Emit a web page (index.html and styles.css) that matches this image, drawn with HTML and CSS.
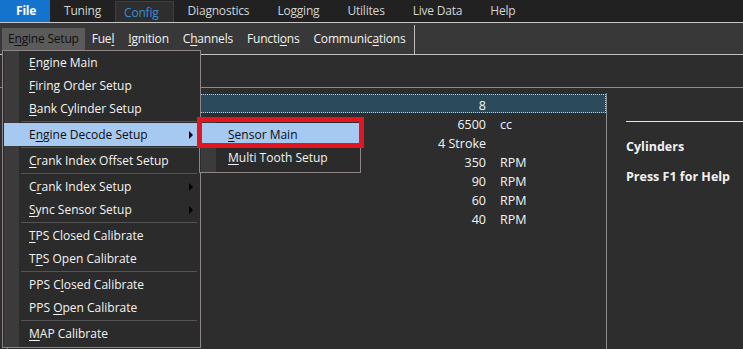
FILE: index.html
```html
<!DOCTYPE html>
<html lang="en">
<head>
  <meta charset="UTF-8"/>
  <title>Config - Engine Setup</title>
  <link rel="stylesheet" href="styles.css">
</head>
<body>

  <div class="topbar">
    <span class="tab tab-file">File</span>
    <span class="tab">Tuning</span>
    <span class="tab tab-active">Config</span>
    <span class="tab">Diagnostics</span>
    <span class="tab">Logging</span>
    <span class="tab">Utilites</span>
    <span class="tab">Live Data</span>
    <span class="tab">Help</span>
  </div>

  <div class="menustrip">
    <span class="mitem mitem-open">E<u>n</u>gine Setup</span>
    <span class="mitem">Fue<u>l</u></span>
    <span class="mitem"><u>I</u>gnition</span>
    <span class="mitem">C<u>h</u>annels</span>
    <span class="mitem">Functi<u>o</u>ns</span>
    <span class="mitem">Communic<u>a</u>tions</span>
    <span class="msep"></span>
  </div>

  <div class="workspace">
    <div class="toolstrip"></div>

    <div class="panes">
      <div class="grid">
        <div class="row row-sel"><span class="val">8</span><span class="unit"></span></div>
        <div class="row"><span class="val">6500</span><span class="unit">cc</span></div>
        <div class="row"><span class="val">4 Stroke</span><span class="unit"></span></div>
        <div class="row"><span class="val">350</span><span class="unit">RPM</span></div>
        <div class="row"><span class="val">90</span><span class="unit">RPM</span></div>
        <div class="row"><span class="val">60</span><span class="unit">RPM</span></div>
        <div class="row"><span class="val">40</span><span class="unit">RPM</span></div>
      </div>
      <div class="help">
        <div class="help-rule"></div>
        <div class="help-title">Cylinders</div>
        <div class="help-title">Press F1 for Help</div>
      </div>
    </div>

    <!-- Engine Setup dropdown -->
    <div class="dropdown">
      <div class="ditem"><u>E</u>ngine Main</div>
      <div class="ditem"><u>F</u>iring Order Setup</div>
      <div class="ditem"><u>B</u>ank Cylinder Setup</div>
      <div class="dsep"></div>
      <div class="ditem ditem-hot">E<u>n</u>gine Decode Setup<span class="arrow"></span></div>
      <div class="dsep"></div>
      <div class="ditem"><u>C</u>rank Index Offset Setup</div>
      <div class="dsep"></div>
      <div class="ditem">C<u>r</u>ank Index Setup<span class="arrow"></span></div>
      <div class="ditem"><u>S</u>ync Sensor Setup<span class="arrow"></span></div>
      <div class="dsep"></div>
      <div class="ditem"><u>T</u>PS Closed Calibrate</div>
      <div class="ditem">T<u>P</u>S Open Calibrate</div>
      <div class="dsep"></div>
      <div class="ditem">PPS C<u>l</u>osed Calibrate</div>
      <div class="ditem">PPS <u>O</u>pen Calibrate</div>
      <div class="dsep"></div>
      <div class="ditem"><u>M</u>AP Calibrate</div>
    </div>

    <!-- Engine Decode Setup submenu -->
    <div class="submenu">
      <div class="ditem ditem-hot"><u>S</u>ensor Main</div>
      <div class="ditem"><u>M</u>ulti Tooth Setup</div>
    </div>

    <!-- red annotation box -->
    <div class="marker"></div>
  </div>

</body>
</html>
```

FILE: styles.css
```css
body {
  margin: 0;
  width: 743px;
  height: 349px;
  overflow: hidden;
  background-color: #2d2d2d;
  color: #ececec;
  font-family: "Open Sans", "Liberation Sans", sans-serif;
  font-size: 12px;
}

u { text-underline-offset: 2px; }

/* === top tabs === */
.topbar {
  display: flex;
  height: 22px;
  background-color: #212121;
}

.tab {
  padding: 0 14px;
  line-height: 22px;
  color: #d4d4d4;
  letter-spacing: -0.2px;
}

.tab-file {
  width: 50px;
  box-sizing: border-box;
  padding: 0 0 0 16px;
  background-color: #1473cc;
  color: #fff;
  font-weight: bold;
}

.tab-active {
  margin-top: 1px;
  padding: 0 14px 0 8px;
  line-height: 21px;
  background-color: #2e2e2e;
  border: 1px solid #3e3e3e;
  border-bottom: none;
  color: #3a8cd8;
}

/* === menu strip === */
.menustrip {
  display: flex;
  align-items: center;
  height: 31px;
  padding-left: 2px;
  background-color: #383838;
  border-top: 1px solid #c6c6c6;
  border-bottom: 1px solid #c6c6c6;
}

.mitem {
  padding: 0 7px;
  line-height: 22px;
  color: #f2f2f2;
  letter-spacing: -0.2px;
}

.mitem-open {
  padding: 0 6px;
  background-color: #5b5b5b;
  color: #101010;
}

.msep {
  align-self: stretch;
  width: 1px;
  margin: 2px 0 0 1px;
  background-color: #bdbdbd;
}

/* === workspace === */
.workspace {
  position: relative;
  height: 294px;
}

.toolstrip {
  height: 32px;
  border-bottom: 1px solid #8c8c8c;
}

.panes {
  display: flex;
  height: 256px;
  margin-top: 5px;
}

.grid {
  width: 598px;
  margin-left: 7px;
  border-left: 1px solid #7a7a7a;
  border-right: 1px solid #8c8c8c;
}

.row {
  display: grid;
  grid-template-columns: 478px 1fr;
  column-gap: 14px;
  box-sizing: border-box;
  height: 19px;
  padding-top: 2px;
  line-height: 19px;
  font-size: 12.5px;
  color: #f4f4f4;
}

.row .val { text-align: right; }

.row-sel {
  margin-top: 1px;
  background-color: #2b4a5c;
  outline: 1px dotted #a8dcf0;
  outline-offset: -1px;
}

.help {
  flex: 1;
  padding: 28px 0 0 19px;
}

.help-rule {
  height: 1px;
  margin-bottom: 16px;
  background-color: #e6e6e6;
}

.help-title {
  height: 30px;
  font-weight: bold;
  font-size: 12.5px;
  color: #f2f2f2;
}

/* === dropdown menus === */
.dropdown,
.submenu {
  position: absolute;
  box-sizing: border-box;
  border: 1px solid #8f8787;
  background-color: #2b2b2b;
  background-image: linear-gradient(to right, #2b2b2b 1px, #3b3b3b 1px, #3b3b3b 16px, #2b2b2b 16px);
}

.dropdown {
  left: 2px;
  top: -5px;
  width: 199px;
  padding: 0 0 2px 0;
}

.submenu {
  left: 199px;
  top: 66px;
  width: 162px;
  padding: 1px 0 3px 0;
}

.ditem {
  position: relative;
  height: 23px;
  margin: 0 1px;
  padding-left: 25px;
  line-height: 23px;
  color: #f4f4f4;
  white-space: nowrap;
}

.submenu .ditem { padding-left: 27px; }

.ditem-hot {
  background-color: #a6c9f1;
  color: #0d0d0d;
}

.arrow {
  position: absolute;
  right: 6px;
  top: 8px;
  border-left: 4px solid #000;
  border-top: 4px solid transparent;
  border-bottom: 4px solid transparent;
}

.dsep {
  height: 1px;
  margin: 1px 3px 1px 18px;
  background-color: #545454;
}

.marker {
  position: absolute;
  left: 197px;
  top: 62px;
  width: 167px;
  height: 31px;
  box-sizing: border-box;
  border: 5px solid #e3161f;
}
```
